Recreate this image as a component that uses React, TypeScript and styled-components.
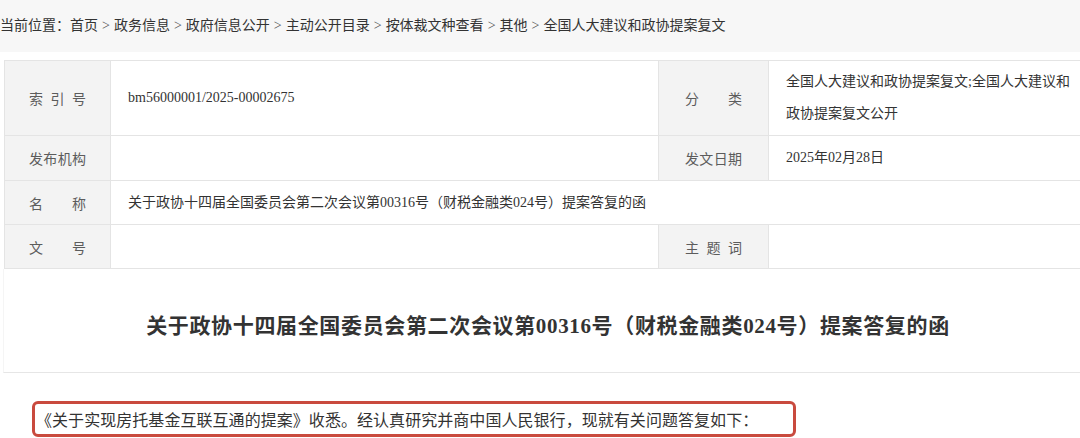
import React from "react";
import styled, { createGlobalStyle } from "styled-components";

const GlobalStyle = createGlobalStyle`
  html, body {
    margin: 0;
    padding: 0;
    width: 1080px;
    height: 438px;
    overflow: hidden;
    background: #ffffff;
  }
  body {
    font-family: "Liberation Serif", "Noto Sans CJK SC", serif;
    color: #333;
  }
`;

const Page = styled.div`
  width: 1080px;
  height: 438px;
  display: flex;
  flex-direction: column;
`;

const Breadcrumb = styled.div`
  height: 52px;
  background: #f7f7f7;
  font-size: 14px;
  line-height: 51px;
  color: #333;
  white-space: nowrap;
`;

const Sep = styled.span`
  margin: 0 4px;
  color: #555;
`;

const Main = styled.div`
  background: #ffffff;
  flex: 1;
  display: flex;
  flex-direction: column;
`;

const TableWrap = styled.div`
  padding: 8px 0 0 4px;
`;

const InfoTable = styled.div`
  display: grid;
  grid-template-columns: 106px 548px 110px 326px;
  grid-template-rows: 75px 45px 44px 44px;
  width: 1090px;
  border-top: 1px solid #e4e4e4;
  border-left: 1px solid #e4e4e4;
`;

const LabelCell = styled.div`
  background: #f3f3f3;
  border-right: 1px solid #e4e4e4;
  border-bottom: 1px solid #e4e4e4;
  display: flex;
  align-items: center;
  justify-content: center;
`;

const LabelText = styled.span`
  display: inline-block;
  width: 57px;
  font-size: 14px;
  color: #5c5c5c;
  text-align: justify;
  text-align-last: justify;
`;

const ValueCell = styled.div<{ $span?: number }>`
  grid-column: span ${(p) => p.$span ?? 1};
  border-right: 1px solid #e4e4e4;
  border-bottom: 1px solid #e4e4e4;
  display: flex;
  align-items: center;
  padding: 0 15px 0 17px;
  font-size: 14px;
  line-height: 32px;
  color: #333;
`;

const TitleBlock = styled.div`
  height: 104px;
  margin-left: 3px;
  border-left: 1px solid #f5f5f5;
  border-bottom: 1px solid #e6e6e6;
  display: flex;
  align-items: center;
  justify-content: center;
  padding-top: 6px;
  box-sizing: border-box;
`;

const DocTitle = styled.h1`
  margin: 0 0 0 12px;
  font-size: 21px;
  font-weight: 700;
  color: #333;
  letter-spacing: 0.65px;
`;

const Body = styled.div`
  padding: 28px 0 0 32px;
`;

const Highlight = styled.div`
  width: 764px;
  height: 36px;
  box-sizing: border-box;
  border: 3px solid #c94a3e;
  border-radius: 6px;
  display: flex;
  align-items: center;
  padding-left: 1px;
  font-size: 16px;
  letter-spacing: 0.05px;
  color: #333;
  white-space: nowrap;
`;

const crumbs = [
  "首页",
  "政务信息",
  "政府信息公开",
  "主动公开目录",
  "按体裁文种查看",
  "其他",
  "全国人大建议和政协提案复文",
];

const docName =
  "关于政协十四届全国委员会第二次会议第00316号（财税金融类024号）提案答复的函";

function App() {
  return (
    <>
      <GlobalStyle />
      <Page>
        <Breadcrumb>
          当前位置：
          {crumbs.map((c, i) => (
            <React.Fragment key={c}>
              {i > 0 && <Sep>&gt;</Sep>}
              {c}
            </React.Fragment>
          ))}
        </Breadcrumb>
        <Main>
          <TableWrap>
            <InfoTable>
              <LabelCell>
                <LabelText>索引号</LabelText>
              </LabelCell>
              <ValueCell>bm56000001/2025-00002675</ValueCell>
              <LabelCell>
                <LabelText>分类</LabelText>
              </LabelCell>
              <ValueCell>
                全国人大建议和政协提案复文;全国人大建议和政协提案复文公开
              </ValueCell>

              <LabelCell>
                <LabelText>发布机构</LabelText>
              </LabelCell>
              <ValueCell />
              <LabelCell>
                <LabelText>发文日期</LabelText>
              </LabelCell>
              <ValueCell>2025年02月28日</ValueCell>

              <LabelCell>
                <LabelText>名称</LabelText>
              </LabelCell>
              <ValueCell $span={3}>{docName}</ValueCell>

              <LabelCell>
                <LabelText>文号</LabelText>
              </LabelCell>
              <ValueCell />
              <LabelCell>
                <LabelText>主题词</LabelText>
              </LabelCell>
              <ValueCell />
            </InfoTable>
          </TableWrap>
          <TitleBlock>
            <DocTitle>{docName}</DocTitle>
          </TitleBlock>
          <Body>
            <Highlight>
              《关于实现房托基金互联互通的提案》收悉。经认真研究并商中国人民银行，现就有关问题答复如下：
            </Highlight>
          </Body>
        </Main>
      </Page>
    </>
  );
}

export default App;
